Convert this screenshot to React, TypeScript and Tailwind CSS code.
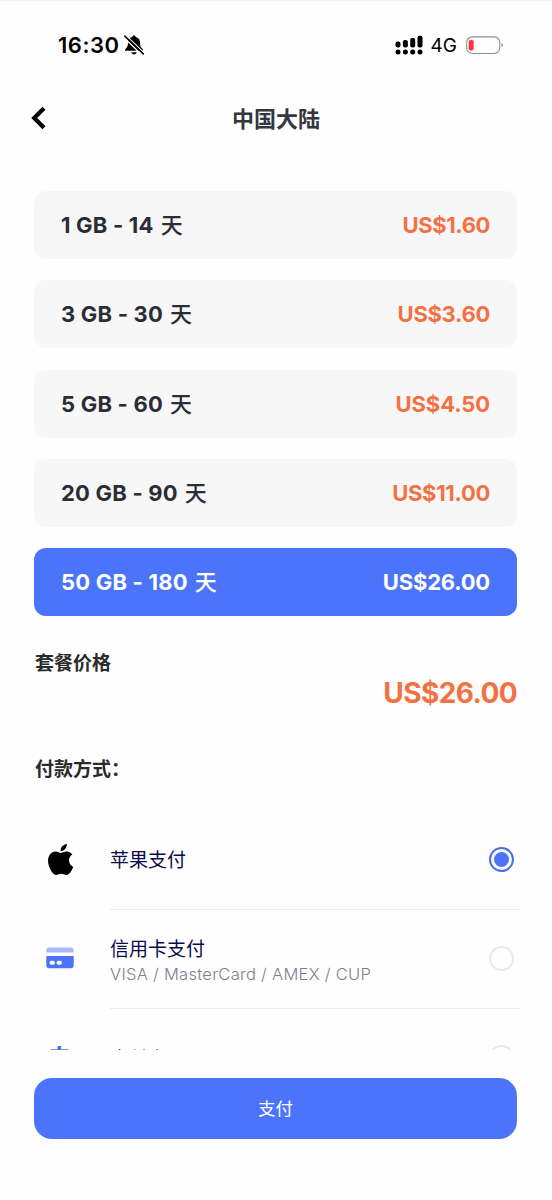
import React, { useState } from 'react';

interface Plan {
  id: number;
  data: string;
  price: string;
  priceTracking: string;
}

const PLANS: Plan[] = [
  { id: 1, data: '1 GB - 14', price: 'US$1.60', priceTracking: 'tracking-[-0.4px]' },
  { id: 2, data: '3 GB - 30', price: 'US$3.60', priceTracking: 'tracking-[-0.3px]' },
  { id: 3, data: '5 GB - 60', price: 'US$4.50', priceTracking: 'tracking-[-0.1px]' },
  { id: 4, data: '20 GB - 90', price: 'US$11.00', priceTracking: 'tracking-[-0.3px]' },
  { id: 5, data: '50 GB - 180', price: 'US$26.00', priceTracking: 'tracking-[-0.2px]' },
];

const StatusBar: React.FC = () => (
  <div className="flex h-[89px] shrink-0 items-center justify-between border-t border-[#f4f4f4] pl-[58px] pr-[48px] text-black">
    <div className="flex items-center gap-[5px]">
      <span className="text-[22px] leading-none font-semibold tracking-[0.5px]">16:30</span>
      <svg width="20" height="20" viewBox="0 0 20 20">
        <path d="M10 0.6c-1 0-1.6.6-1.700 1.300C5.400 2.600 4 4.800 4 7.600c0 3.600-.8 4.700-2.500 6.300-.9.9-.5 1.900.5 1.900h16c1 0 1.400-1 .5-1.900C16.800 12.300 16 11.200 16 7.600c0-2.800-1.400-5-4.300-5.700C11.600 1.200 11 .6 10 .6zM7.300 17.200h5.400c-.3 1.300-1.300 2.200-2.700 2.200s-2.400-.9-2.700-2.200z" fill="#000" />
        <path d="M-.3 2.200 18.500 20.500" stroke="#fff" strokeWidth="1.400" />
        <path d="M2.300 .6 20.500 18.300" stroke="#fff" strokeWidth="1.200" />
        <path d="M.8 1.100 19.300 18.900" stroke="#000" strokeWidth="1.500" strokeLinecap="round" />
      </svg>
    </div>
    <div className="flex items-center">
      <svg width="28" height="20" viewBox="0 0 28 20">
        <rect x="0.500" y="6.500" width="5" height="6" rx="2.200" />
        <rect x="7.900" y="5" width="5" height="7.500" rx="2.200" />
        <rect x="15.200" y="3" width="5" height="9.500" rx="2" />
        <rect x="22.500" y="0.700" width="5" height="11.800" rx="2" />
        <circle cx="3" cy="16.900" r="2.500" />
        <circle cx="10.400" cy="16.900" r="2.500" />
        <circle cx="17.700" cy="16.900" r="2.500" />
        <circle cx="25" cy="16.900" r="2.500" />
      </svg>
      <span className="ml-[8px] text-[19px] leading-none">4G</span>
      <svg className="ml-[9px]" width="38" height="19" viewBox="0 0 38 19">
        <rect x="0.700" y="0.900" width="33" height="16.600" rx="5.500" fill="none" stroke="#8e8e8e" strokeWidth="1.100" />
        <rect x="2.700" y="3.900" width="5" height="10.500" rx="1.800" fill="#fb3340" />
        <path d="M35.600 7.100c1.700.8 1.700 3.400 0 4.200z" fill="#777" />
      </svg>
    </div>
  </div>
);

const AppleLogo: React.FC = () => (
  <svg width="25" height="31" viewBox="2.200 0 19.400 24" fill="#000" preserveAspectRatio="none">
    <path d="M12.152 6.896c-.948 0-2.415-1.078-3.960-1.040-2.040.027-3.910 1.183-4.961 3.014-2.117 3.675-.546 9.103 1.519 12.090 1.013 1.454 2.208 3.090 3.792 3.039 1.520-.065 2.090-.987 3.935-.987 1.831 0 2.350.987 3.960.948 1.637-.026 2.676-1.480 3.676-2.948 1.156-1.688 1.636-3.325 1.662-3.415-.039-.013-3.182-1.221-3.220-4.857-.026-3.040 2.480-4.494 2.597-4.559-1.429-2.090-3.623-2.324-4.390-2.376-2-.156-3.675 1.090-4.610 1.090zM15.530 3.830c.843-1.012 1.400-2.427 1.245-3.830-1.207.052-2.662.805-3.532 1.818-.780.896-1.454 2.338-1.273 3.714 1.338.104 2.715-.688 3.559-1.701" />
  </svg>
);

const CardIcon: React.FC = () => (
  <svg className="mb-[2px]" width="28" height="22" viewBox="0 0 28 22">
    <path d="M0.300 5.500V3.500a3 3 0 0 1 3-3h21.400a3 3 0 0 1 3 3v2z" fill="#a5bafc" />
    <path d="M0.300 9h27.400v9.300a3 3 0 0 1-3 3H3.300a3 3 0 0 1-3-3z" fill="#4b74fa" />
    <rect x="3.500" y="13.800" width="5.400" height="4" rx="2" fill="#fff" />
    <rect x="10.500" y="13.800" width="5.400" height="4" rx="2" fill="#fff" />
  </svg>
);

const AlipayIcon: React.FC = () => (
  <svg width="26" height="26" viewBox="0 0 26 26">
    <path d="M10.500 1h3.600v3.200h7.400v1.600h-7.400v3h6.200c-.7 3-2 5.400-3.800 7.300l6 2.700-1.300 2.600-7.300-3.500C10 22.200 4 21.700 4 18c0-3.700 5-4.600 10-2.300 1-1.100 1.700-2.400 2.200-3.900H5.500v-1.800h5V5.800H4V4.200h6.500z" fill="#4b74fa" />
  </svg>
);

const METHODS = [
  { id: 'apple', name: '苹果支付', note: '', pad: 'pt-[4px]', icon: <AppleLogo /> },
  { id: 'card', name: '信用卡支付', note: 'VISA / MasterCard / AMEX / CUP', pad: 'pt-[5px]', icon: <CardIcon /> },
  { id: 'alipay', name: '支付宝', note: '', pad: 'pt-[6px]', icon: <AlipayIcon /> },
];

const App: React.FC = () => {
  const [planId, setPlanId] = useState(5);
  const [method, setMethod] = useState('apple');
  const current = PLANS.find((p) => p.id === planId) || PLANS[0];

  return (
    <div className="flex h-[1200px] w-[552px] flex-col overflow-hidden bg-[#fefefe] font-['Inter','Noto_Sans_CJK_SC',sans-serif]">
      <StatusBar />

      {/* Header */}
      <header className="grid h-[59px] shrink-0 grid-cols-[40px_1fr_40px] items-center px-[30px]">
        <button className="flex items-center pb-[2px]">
          <svg width="16" height="24" viewBox="0 0 16 24">
            <path d="M14 2.200 4.200 12l9.800 9.800" fill="none" stroke="#000" strokeWidth="4.200" />
          </svg>
        </button>
        <h1 className="text-center text-[22px] leading-[30px] font-bold text-[#34363f]">中国大陆</h1>
      </header>

      {/* Plans */}
      <div className="mt-[43px] flex shrink-0 flex-col gap-[21.25px] pl-[34px] pr-[35px]">
        {PLANS.map((plan) => (
          <button
            key={plan.id}
            onClick={() => setPlanId(plan.id)}
            className={`flex h-[68px] items-center justify-between rounded-[12px] px-[27px] pt-px text-[22px] font-bold ${
              plan.id === planId ? 'bg-[#4b74fa] text-white' : 'bg-[#f7f7f7] text-[#2b2d36]'
            }`}
          >
            <span className="flex items-center gap-[7px]">
              <span className="tracking-[0.2px]">{plan.data}</span>
              <span className="font-medium">天</span>
            </span>
            <span className={`${plan.priceTracking} ${plan.id === planId ? 'text-white' : 'text-[#f47143]'}`}>{plan.price}</span>
          </button>
        ))}
      </div>

      {/* Total */}
      <div className="mt-[34px] flex h-[74px] shrink-0 flex-col pl-[35px] pr-[35px]">
        <span className="text-[19px] leading-[28px] font-bold text-[#2a2a2a]">套餐价格</span>
        <span className="-mt-px self-end text-[28px] leading-[32px] font-bold tracking-[-0.6px] text-[#f47143]">{current.price}</span>
      </div>

      <h2 className="mt-[32px] shrink-0 pl-[35px] text-[19px] leading-[28px] font-bold text-[#2a2a2a]">付款方式：</h2>

      {/* Payment methods */}
      <div className="mt-[27px] h-[239px] shrink-0 overflow-hidden pl-[35px] pr-[32px]">
        {METHODS.map((m) => (
          <div key={m.id} onClick={() => setMethod(m.id)} className="flex h-[99px]">
            <div className="flex w-[50px] shrink-0 items-center justify-center pb-[2px]">{m.icon}</div>
            <div className="ml-[25px] flex flex-1 items-center justify-between border-b border-[#ececee] pr-[6px] pb-[2px]">
              <div className={`flex flex-col ${m.pad}`}>
                <span className="text-[19px] leading-[28px] text-[#0a0a4a]">{m.name}</span>
                {m.note && <span className="-mt-px text-[16.500px] leading-[23px] font-light tracking-[0.28px] text-[#7d7f90]">{m.note}</span>}
              </div>
              <span
                className={`flex h-[25px] w-[25px] items-center justify-center rounded-full border-2 ${
                  m.id === method ? 'border-[#4b6cf0]' : 'border-[#e9eaee]'
                }`}
              >
                {m.id === method && <span className="h-[15px] w-[15px] rounded-full bg-[#4b74fa]" />}
              </span>
            </div>
          </div>
        ))}
      </div>

      {/* Pay */}
      <div className="mt-[28px] shrink-0 pl-[34px] pr-[35px]">
        <button className="h-[61px] w-full rounded-[18px] bg-[#4b74fa] pt-[2px] text-[17.500px] text-white">支付</button>
      </div>
    </div>
  );
};

export default App;
